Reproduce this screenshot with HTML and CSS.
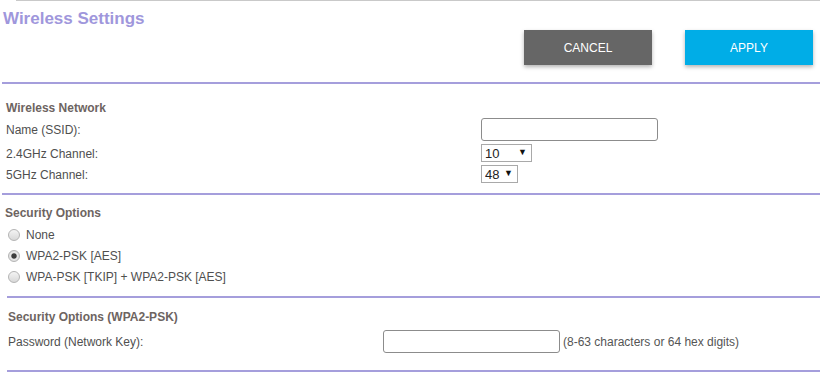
FILE: index.html
```html
<!DOCTYPE html>
<html lang="en">
<head>
    <meta charset="UTF-8">
    <meta name="viewport" content="width=device-width, initial-scale=1.0">
    <title>Wireless Settings</title>
    <link rel="stylesheet" href="styles.css">
</head>
<body>

    <div class="topline"></div>

    <!-- Titolo e pulsanti -->
    <div class="page-head">
        <h1 class="page-title">Wireless Settings</h1>
        <div class="actions">
            <button class="btn btn-cancel">CANCEL</button>
            <button class="btn btn-apply">APPLY</button>
        </div>
    </div>
    <div class="rule"></div>

    <!-- Rete wireless -->
    <div class="section section-network">
        <h3 class="section-title">Wireless Network</h3>
        <div class="form-grid">
            <label for="ssid">Name (SSID):</label>
            <div class="field"><input type="text" id="ssid" class="text-input"></div>

            <label for="ch24">2.4GHz Channel:</label>
            <div class="field">
                <span class="select-wrap wide"><select id="ch24"><option>10</option></select></span>
            </div>

            <label for="ch5">5GHz Channel:</label>
            <div class="field">
                <span class="select-wrap"><select id="ch5"><option>48</option></select></span>
            </div>
        </div>
    </div>
    <div class="rule"></div>

    <!-- Opzioni di sicurezza -->
    <div class="section section-security">
        <h3 class="section-title">Security Options</h3>
        <label class="radio-row"><input type="radio" name="sec"> None</label>
        <label class="radio-row"><input type="radio" name="sec" checked> WPA2-PSK [AES]</label>
        <label class="radio-row"><input type="radio" name="sec"> WPA-PSK [TKIP] + WPA2-PSK [AES]</label>
    </div>
    <div class="rule rule-inset"></div>

    <!-- Password -->
    <div class="section section-key">
        <h3 class="section-title">Security Options (WPA2-PSK)</h3>
        <div class="key-row">
            <label for="key">Password (Network Key):</label>
            <div class="field">
                <input type="text" id="key" class="text-input">
                <span class="hint">(8-63 characters or 64 hex digits)</span>
            </div>
        </div>
    </div>
    <div class="rule rule-inset"></div>

</body>
</html>
```

FILE: styles.css
```css
body {
    font-family: "Liberation Sans", Arial, sans-serif;
    font-size: 12px;
    color: #4f4f4f;
    margin: 0;
    padding: 0;
    background: #fff;
}

.topline {
    margin-left: 16px;
    border-top: 1px solid #c9c9c9;
}

.page-head {
    padding: 0 7px 17px 3px;
}
.page-title {
    margin: 8px 0 0;
    font-size: 17px;
    line-height: 20px;
    font-weight: bold;
    color: #9f97dc;
}
.actions {
    display: flex;
    justify-content: flex-end;
    gap: 33px;
    margin-top: 1px;
}
.btn {
    width: 128px;
    height: 35px;
    border: none;
    color: #fff;
    font-family: "Liberation Sans", Arial, sans-serif;
    font-size: 12px;
    box-shadow: 0 2px 4px rgba(0, 0, 0, 0.3);
    cursor: pointer;
}
.btn-cancel {
    background-color: #666;
}
.btn-apply {
    background-color: #00ade7;
}

.rule {
    margin-left: 2px;
    border-top: 2px solid #a59edc;
}
.rule-inset {
    margin-left: 7px;
}

.section-title {
    margin: 0;
    font-size: 12px;
    line-height: 14px;
    font-weight: bold;
    color: #6d6461;
}

/* Rete wireless */
.section-network {
    padding: 17px 0 10px 6px;
}
.form-grid {
    display: grid;
    grid-template-columns: 475px 1fr;
    grid-template-rows: 23px 18px 18px;
    row-gap: 3px;
    margin-top: 3px;
    align-items: center;
}
.form-grid label {
    padding-top: 1px;
}
.field {
    display: flex;
    align-items: center;
}
.text-input {
    width: 177px;
    height: 23px;
    box-sizing: border-box;
    border: 1px solid #8c8c8c;
    border-radius: 3px;
    padding: 0 4px;
    font-size: 12px;
}
.select-wrap {
    position: relative;
    display: inline-block;
}
.select-wrap select {
    appearance: none;
    -webkit-appearance: none;
    width: 37px;
    height: 18px;
    box-sizing: border-box;
    border: 1px solid #a9a9a9;
    border-radius: 0;
    background: #fff;
    padding: 0 0 0 3px;
    font-family: "Liberation Sans", Arial, sans-serif;
    font-size: 13px;
    color: #222;
}
.select-wrap.wide select {
    width: 51px;
}
.select-wrap::after {
    content: "\25BC";
    position: absolute;
    right: 5px;
    top: 3px;
    font-size: 9px;
    color: #111;
    pointer-events: none;
}

/* Opzioni di sicurezza */
.section-security {
    padding: 11px 0 9px 5px;
}
.radio-row {
    display: flex;
    align-items: center;
    height: 21px;
    gap: 6px;
    padding-left: 3px;
}
.radio-row:first-of-type {
    margin-top: 4px;
}
.radio-row input {
    appearance: none;
    -webkit-appearance: none;
    width: 12px;
    height: 12px;
    margin: 0;
    border: 1px solid #b4b4b4;
    border-radius: 50%;
    background: linear-gradient(#f4f4f4, #d8d8d8);
}
.radio-row input:checked {
    background: radial-gradient(circle, #3d3d3d 0, #3d3d3d 2.2px, #e9e9e9 3.2px, #d6d6d6 100%);
}

/* Password */
.section-key {
    padding: 12px 0 17px 8px;
}
.key-row {
    display: grid;
    grid-template-columns: 375px 1fr;
    align-items: center;
    height: 23px;
    margin-top: 6px;
}
.hint {
    margin-left: 3px;
    color: #555;
}
```
